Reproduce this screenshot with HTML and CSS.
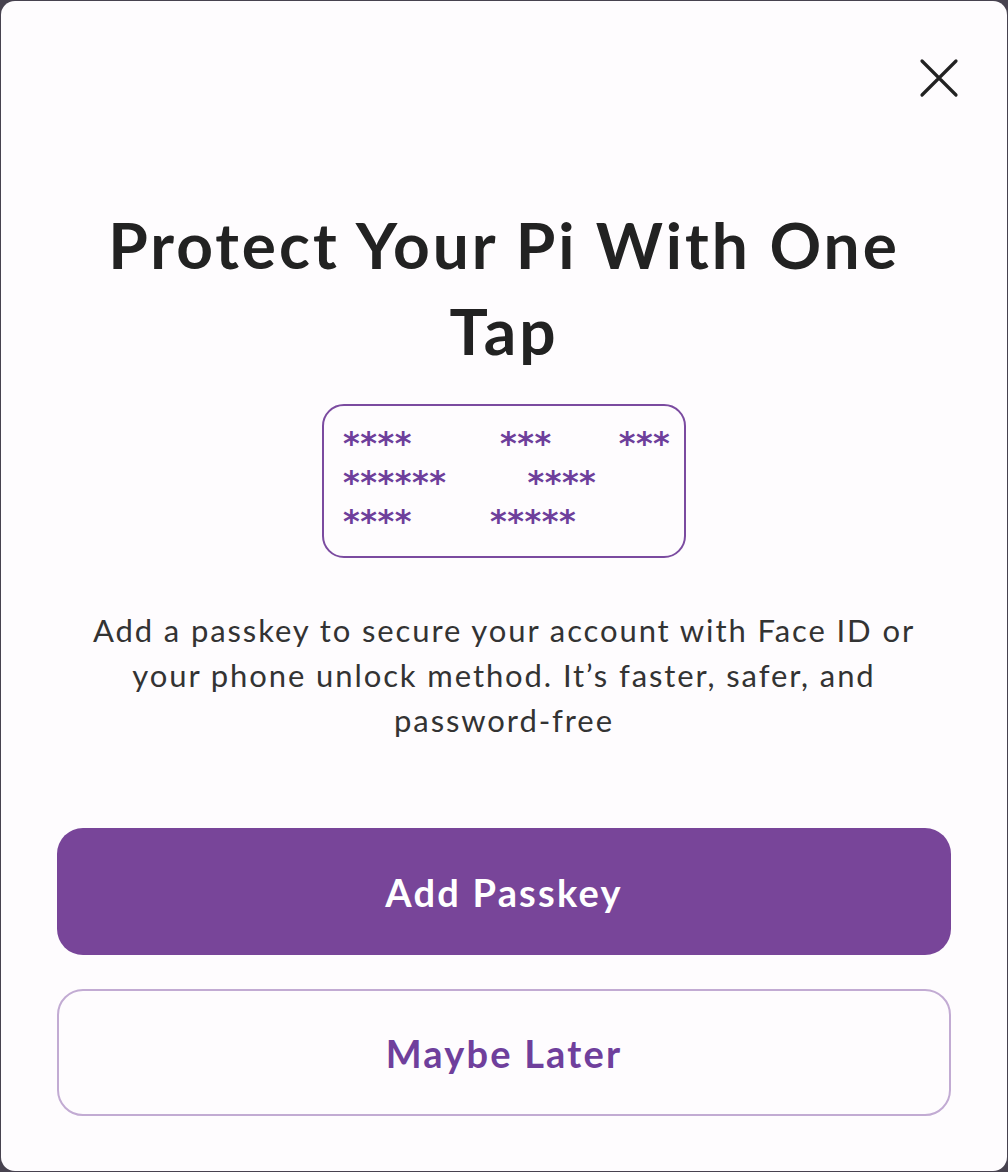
FILE: index.html
```html
<!DOCTYPE html>
<html lang="en">
<head>
<meta charset="utf-8">
<title>Protect Your Pi</title>
<link rel="stylesheet" href="styles.css">
</head>
<body>
<div class="card">
  <div class="header">
    <button class="close" aria-label="Close">
      <svg width="40" height="40" viewBox="0 0 40 40"><path d="M3 3 L37 37 M37 3 L3 37" stroke="#222" stroke-width="3.2" stroke-linecap="round" fill="none"/></svg>
    </button>
  </div>
  <h1 class="title">Protect Your Pi With One Tap</h1>
  <div class="masked">
    <div class="row"><span class="r1a">****</span><span class="r1b">***</span><span class="r1c">***</span></div>
    <div class="row"><span class="r2a">******</span><span class="r2b">****</span></div>
    <div class="row"><span class="r3a">****</span><span class="r3b">*****</span></div>
  </div>
  <p class="desc">Add a passkey to secure your account with Face ID or your phone unlock method. It’s faster, safer, and password-free</p>
  <div class="actions">
    <button class="btn primary">Add Passkey</button>
    <button class="btn secondary">Maybe Later</button>
  </div>
</div>
</body>
</html>
```
FILE: styles.css
```css
html, body {
  margin: 0;
  padding: 0;
}
body {
  background: #47424f;
  font-family: "Lato", "Noto Sans", sans-serif;
}
.card {
  margin: 1px;
  height: 1170px;
  box-sizing: border-box;
  background: #fefcfe;
  border-radius: 14px;
  display: flex;
  flex-direction: column;
  align-items: center;
  padding: 0 56px;
}
.header {
  align-self: stretch;
  display: flex;
  justify-content: flex-end;
  padding-top: 57px;
  margin-right: -8px;
}
.close {
  background: none;
  border: 0;
  padding: 0;
  width: 40px;
  height: 40px;
  display: block;
}
.close svg { display: block; }
.title {
  margin: 104px 0 0;
  font-size: 64px;
  line-height: 86px;
  font-weight: 700;
  color: #222222;
  text-align: center;
  letter-spacing: 3px;
  max-width: 820px;
}
.masked {
  margin-top: 30px;
  width: 364px;
  height: 154px;
  box-sizing: border-box;
  border: 2px solid #7b4ba0;
  border-radius: 22px;
  padding: 17px 0 0 19px;
  color: #6e3f9b;
  font-family: "DejaVu Sans", sans-serif;
  font-weight: 700;
  font-size: 32px;
}
.row {
  display: flex;
  height: 39px;
  align-items: center;
  letter-spacing: 0.5px;
}
.r1b { margin-left: 88px; }
.r1c { margin-left: 67px; }
.r2b { margin-left: 81px; }
.r3b { margin-left: 78px; }
.desc {
  margin: 50px 0 0;
  font-size: 31px;
  line-height: 45px;
  color: #333333;
  text-align: center;
  letter-spacing: 1.9px;
  max-width: 840px;
}
.actions {
  align-self: stretch;
  display: flex;
  flex-direction: column;
  gap: 34px;
  margin-top: 85px;
}
.btn {
  height: 127px;
  border-radius: 26px;
  font-family: "Lato", "Noto Sans", sans-serif;
  font-weight: 700;
  font-size: 38px;
  letter-spacing: 2.2px;
  cursor: pointer;
}
.primary {
  background: #784599;
  color: #ffffff;
  border: 0;
}
.secondary {
  background: #fefcfe;
  color: #6f3f9c;
  border: 2px solid #c2abd3;
}
```
